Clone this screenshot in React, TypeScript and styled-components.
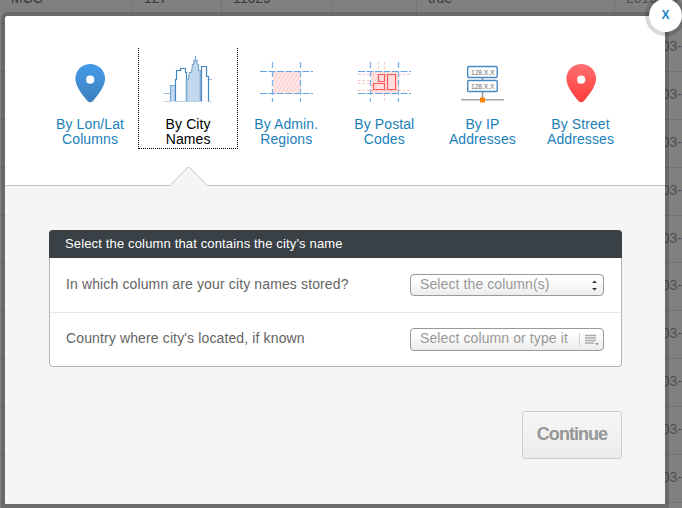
import React from 'react';
import styled, { createGlobalStyle, css } from 'styled-components';

const GlobalStyle = createGlobalStyle`
  *, *::before, *::after { box-sizing: border-box; }
  html, body { margin: 0; padding: 0; overflow: hidden; }
  body { font-family: "Liberation Sans", Arial, sans-serif; background: #808080; }
`;

const Page = styled.main`
  position: relative;
  width: 682px;
  height: 508px;
  overflow: hidden;
  background: #808080;
`;

const Table = styled.div`
  margin-top: -24px;
`;

const TableRow = styled.div<{ $height: number }>`
  display: grid;
  grid-template-columns: 133px 89px 111px 84px 198px 200px;
  height: ${(p) => p.$height}px;
  border-bottom: 1px solid #747474;
`;

const Cell = styled.div<{ $muted?: boolean }>`
  padding: 14px 0 0 11px;
  border-right: 1px solid #757575;
  overflow: hidden;
  white-space: nowrap;
  font-size: 14px;
  line-height: 16px;
  color: ${(p) => (p.$muted ? '#505050' : '#393939')};
`;

const Dialog = styled.section`
  position: absolute;
  left: 5px;
  top: 16px;
  width: 660px;
  height: 488px;
  display: flex;
  flex-direction: column;
  border-radius: 3px 3px 0 0;
  background: #f5f5f5;
  box-shadow: 0 0 0 4px rgba(0, 0, 0, 0.15), 0 -1px 0 4px rgba(0, 0, 0, 0.02);
`;

const CloseButton = styled.button`
  position: absolute;
  right: -17px;
  top: -17px;
  width: 33px;
  height: 33px;
  padding: 0 0 2px;
  border: 0;
  border-radius: 50%;
  background: #fff;
  box-shadow: 0 0 0 4px rgba(0, 0, 0, 0.15);
  color: #1b86c4;
  font: bold 12px/30px "Liberation Sans", Arial, sans-serif;
`;

const TabBar = styled.nav`
  display: flex;
  height: 170px;
  padding: 34px 35px 0 36px;
  border-bottom: 1px solid #c4c4c4;
  border-radius: 3px 3px 0 0;
  background: #fff;
`;

const Tab = styled.a<{ $active?: boolean }>`
  position: relative;
  display: flex;
  flex-direction: column;
  align-items: center;
  width: 98.1px;
  height: 98px;
  color: ${(p) => (p.$active ? '#000' : '#1b7fb9')};
  ${(p) =>
    p.$active &&
    css`
      &::before {
        content: '';
        position: absolute;
        inset: -2px -1px -1px;
        border: 1px dotted #000;
        border-top: 0;
      }
    `}
`;

const TabIcon = styled.svg`
  display: block;
  width: 98px;
  height: 67px;
  flex: none;
`;

const TabLabel = styled.span`
  font-size: 14px;
  line-height: 15px;
  letter-spacing: 0.1px;
  text-align: center;
  white-space: pre-line;
`;

const Pointer = styled.svg`
  position: absolute;
  left: 30px;
  top: 116px;
  width: 40px;
  height: 20px;
`;

const Body = styled.div`
  display: flex;
  flex-direction: column;
  padding: 44px 43px 0 44px;
`;

const Panel = styled.div`
  height: 137px;
  border: 1px solid #b4b4b4;
  border-top: 0;
  border-radius: 4px;
  background: #fff;
`;

const PanelTitle = styled.h3`
  height: 28px;
  margin: 0 -1px;
  padding: 0 16px;
  border-radius: 4px 4px 0 0;
  background: #394046;
  color: #fff;
  font-size: 13px;
  font-weight: 400;
  line-height: 28px;
  letter-spacing: 0.15px;
`;

const Field = styled.div<{ $divided?: boolean }>`
  display: flex;
  align-items: center;
  justify-content: space-between;
  height: ${(p) => (p.$divided ? 55 : 53)}px;
  padding: 0 17px 0 16px;
  border-bottom: ${(p) => (p.$divided ? '1px solid #e7e7e7' : '0')};
`;

const FieldLabel = styled.label`
  color: #646464;
  font-size: 14px;
  line-height: 18px;
  letter-spacing: 0.13px;
  padding-bottom: 3px;
`;

const SelectBox = styled.div<{ $height: number }>`
  display: flex;
  align-items: center;
  justify-content: space-between;
  width: 194px;
  height: ${(p) => p.$height}px;
  padding-left: 9px;
  border: 1px solid #999;
  border-radius: 4px;
  background: linear-gradient(#fff 20%, #ececec);
  color: #999;
  font-size: 14px;
  line-height: 18px;
  letter-spacing: 0.1px;
  white-space: nowrap;
`;

const SelectText = styled.span<{ $raised?: boolean }>`
  padding-bottom: ${(p) => (p.$raised ? 3 : 2)}px;
`;

const Handle = styled.svg`
  display: block;
  width: 26px;
  height: 20px;
  flex: none;
`;

const Continue = styled.button`
  align-self: flex-end;
  width: 100px;
  height: 48px;
  margin-top: 44px;
  padding: 0 0 3px;
  border: 1px solid #cecece;
  border-radius: 3px;
  background: linear-gradient(#f6f6f6, #ececec);
  color: #969696;
  font: bold 18px/20px "Liberation Sans", Arial, sans-serif;
  letter-spacing: -0.95px;
`;

const Pin = ({ id, top, bottom }: { id: string; top: string; bottom: string }) => (
  <TabIcon viewBox="0 0 98 67">
    <defs>
      <linearGradient id={id} x1="0" y1="0" x2="0" y2="1">
        <stop offset="0" stopColor={top} />
        <stop offset="1" stopColor={bottom} />
      </linearGradient>
    </defs>
    <path
      fill={`url(#${id})`}
      fillRule="evenodd"
      d="M49.200 14C40.700 14 34.400 20.500 34.400 28.700C34.400 34.500 39 42.500 46.500 50.900Q49.200 53.400 51.900 50.900C59.400 42.500 64.100 34.500 64.100 28.700C64.100 20.500 57.700 14 49.200 14ZM49.200 25.600A4.100 4.100 0 1 1 49.200 33.800A4.100 4.100 0 1 1 49.200 25.600Z"
    />
  </TabIcon>
);

const City = () => (
  <TabIcon viewBox="0 0 98 67">
    <g fill="none" strokeWidth="1.2">
      <path d="M31.500 51.500V35.500H36.500V51.500" fill="#c3d8ec" stroke="#7caad5" />
      <path
        d="M36.500 51.500V29.500H37.500V20.500H41.500V18.500H46.500V22.500H47.500V30"
        fill="#fff"
        stroke="#4385c2"
      />
      <path
        d="M47.500 51.500V29.500H49.500L50.500 22.500H52.500L53.500 14.500H54.500L55.500 10.500H56.500V6V10.500H57.500L58.500 14.500H59.500V20.500H61.500V51.500Z"
        fill="#c3d8ec"
        stroke="#79a8d2"
      />
      <path d="M54 10.500H59" stroke="#79a8d2" />
      <path d="M62.500 51.500V16.500H67.500V26.500H69.500V51.500" stroke="#4385c2" />
      <path d="M47.500 30V51.500M61.500 20V51.500" stroke="#79a8d2" strokeWidth="1.500" />
      <path d="M25 43.500H31M70 29.500H73" stroke="#94bbdf" />
      <path d="M25 51.500H31M36 51.500H62M70 51.500H73" stroke="#b8d2ea" />
    </g>
  </TabIcon>
);

const Hatch = ({ id, color, x, y, w, h }: { id: string; color: string; x: number; y: number; w: number; h: number }) => (
  <>
    <defs>
      <pattern id={id} width="3.300" height="3.300" patternUnits="userSpaceOnUse" patternTransform="rotate(32)">
        <rect width="3.300" height="3.300" fill="#ffeaea" />
        <path d="M1 0V3.300" stroke={color} strokeWidth="1.200" />
      </pattern>
    </defs>
    <rect x={x} y={y} width={w} height={h} fill={`url(#${id})`} />
  </>
);

const Grid = () => (
  <g fill="none">
    <path d="M23 21.500H76M23 43.500H76" stroke="#66a4e4" strokeWidth="1.200" strokeDasharray="7 1.500" />
    <path d="M35.500 12V52M63.500 12V52" stroke="#7fb2e7" strokeWidth="1.300" strokeDasharray="6 3" />
  </g>
);

const Regions = () => (
  <TabIcon viewBox="0 0 98 67">
    <Hatch id="hatch-region" color="#ffcdcd" x={36} y={22} w={28} h={21} />
    <Grid />
  </TabIcon>
);

const Postal = () => (
  <TabIcon viewBox="0 0 98 67">
    <Hatch id="hatch-postal" color="#ffcdcd" x={36} y={22} w={28} h={21} />
    <path
      d="M23 24.500H76M23 40.500H76M23 30.500H36M23 33.500H36M43.500 12V22M49.500 12V52"
      stroke="#ffc0c0"
      strokeDasharray="2.500 2"
    />
    <Grid />
    <path
      d="M43.500 24.500H49.500V31.500H43.500ZM52.500 24.500H60.500V39.500H52.500ZM38.500 33.500H49.500V39.500H38.500Z"
      fill="#ffdfdf"
      stroke="#fa5757"
      strokeWidth="1.200"
    />
  </TabIcon>
);

const Network = () => (
  <TabIcon viewBox="0 0 98 67">
    <path d="M49.500 28V31M49.500 42V49" stroke="#999" strokeWidth="1.500" />
    <path d="M28 49.800H71" stroke="#a5a5a5" strokeWidth="1.600" />
    <rect x="34.700" y="16.500" width="29.500" height="11" rx="1" fill="#fff" stroke="#4a88c2" strokeWidth="1.400" />
    <rect x="34.700" y="30.500" width="29.500" height="11" rx="1" fill="#fff" stroke="#4a88c2" strokeWidth="1.400" />
    <g fill="#6b6b6b" fontFamily="Liberation Sans, Arial, sans-serif" fontSize="6.800">
      <text x="38" y="24.500" textLength="23.500">128.X.X</text>
      <text x="38" y="38.500" textLength="23.500">128.X.X</text>
    </g>
    <rect x="47" y="47.500" width="5" height="5" fill="#ff8500" />
  </TabIcon>
);

const tabs = [
  { label: 'By Lon/Lat\nColumns', icon: <Pin id="pin-blue" top="#469bea" bottom="#3b7fbd" /> },
  { label: 'By City\nNames', icon: <City />, active: true },
  { label: 'By Admin.\nRegions', icon: <Regions /> },
  { label: 'By Postal\nCodes', icon: <Postal /> },
  { label: 'By IP\nAddresses', icon: <Network /> },
  { label: 'By Street\nAddresses', icon: <Pin id="pin-red" top="#ff7070" bottom="#ff3b3b" /> },
];

const rowHeights = [48, 48, 48, 48, 48, 47, 48, 48, 48, 48, 48];

export default function App() {
  return (
    <>
      <GlobalStyle />
      <Page>
        <Table>
          {rowHeights.map((height, i) => (
            <TableRow key={i} $height={height}>
              <Cell>{i === 0 ? 'MCC' : ''}</Cell>
              <Cell>{i === 0 ? '127' : ''}</Cell>
              <Cell>{i === 0 ? '11029' : ''}</Cell>
              <Cell />
              <Cell>{i === 0 ? 'true' : ''}</Cell>
              <Cell $muted>2013-03-03</Cell>
            </TableRow>
          ))}
        </Table>
        <Dialog>
          <TabBar>
            {tabs.map((tab) => (
              <Tab key={tab.label} $active={tab.active}>
                {tab.icon}
                <TabLabel>{tab.label}</TabLabel>
                {tab.active && (
                  <Pointer viewBox="0 0 40 20">
                    <path d="M1 20V19.500L18.500 1.500H20.500L38 19.500V20Z" fill="#f5f5f5" />
                    <path d="M1 19.500L18.500 1.500H20.500L38 19.500" fill="none" stroke="#c4c4c4" />
                  </Pointer>
                )}
              </Tab>
            ))}
          </TabBar>
          <Body>
            <Panel>
              <PanelTitle>Select the column that contains the city's name</PanelTitle>
              <Field $divided>
                <FieldLabel>In which column are your city names stored?</FieldLabel>
                <SelectBox $height={22}>
                  <SelectText>Select the column(s)</SelectText>
                  <Handle viewBox="0 0 26 20">
                    <path d="M15 8L17.500 5.500L20 8ZM15 13H20L17.500 15.500Z" fill="#333" />
                  </Handle>
                </SelectBox>
              </Field>
              <Field>
                <FieldLabel>Country where city's located, if known</FieldLabel>
                <SelectBox $height={23}>
                  <SelectText $raised>Select column or type it</SelectText>
                  <Handle viewBox="0 0 26 20">
                    <path d="M2.500 3V17" stroke="#d2d2d2" />
                    <path d="M8 5.500H19M8 8H19M8 10.500H19M8 13H17" stroke="#aaa" strokeWidth="1.300" />
                    <path d="M18 13H22L20 15.500Z" fill="#999" />
                  </Handle>
                </SelectBox>
              </Field>
            </Panel>
            <Continue>Continue</Continue>
          </Body>
          <CloseButton aria-label="Close">X</CloseButton>
        </Dialog>
      </Page>
    </>
  );
}
